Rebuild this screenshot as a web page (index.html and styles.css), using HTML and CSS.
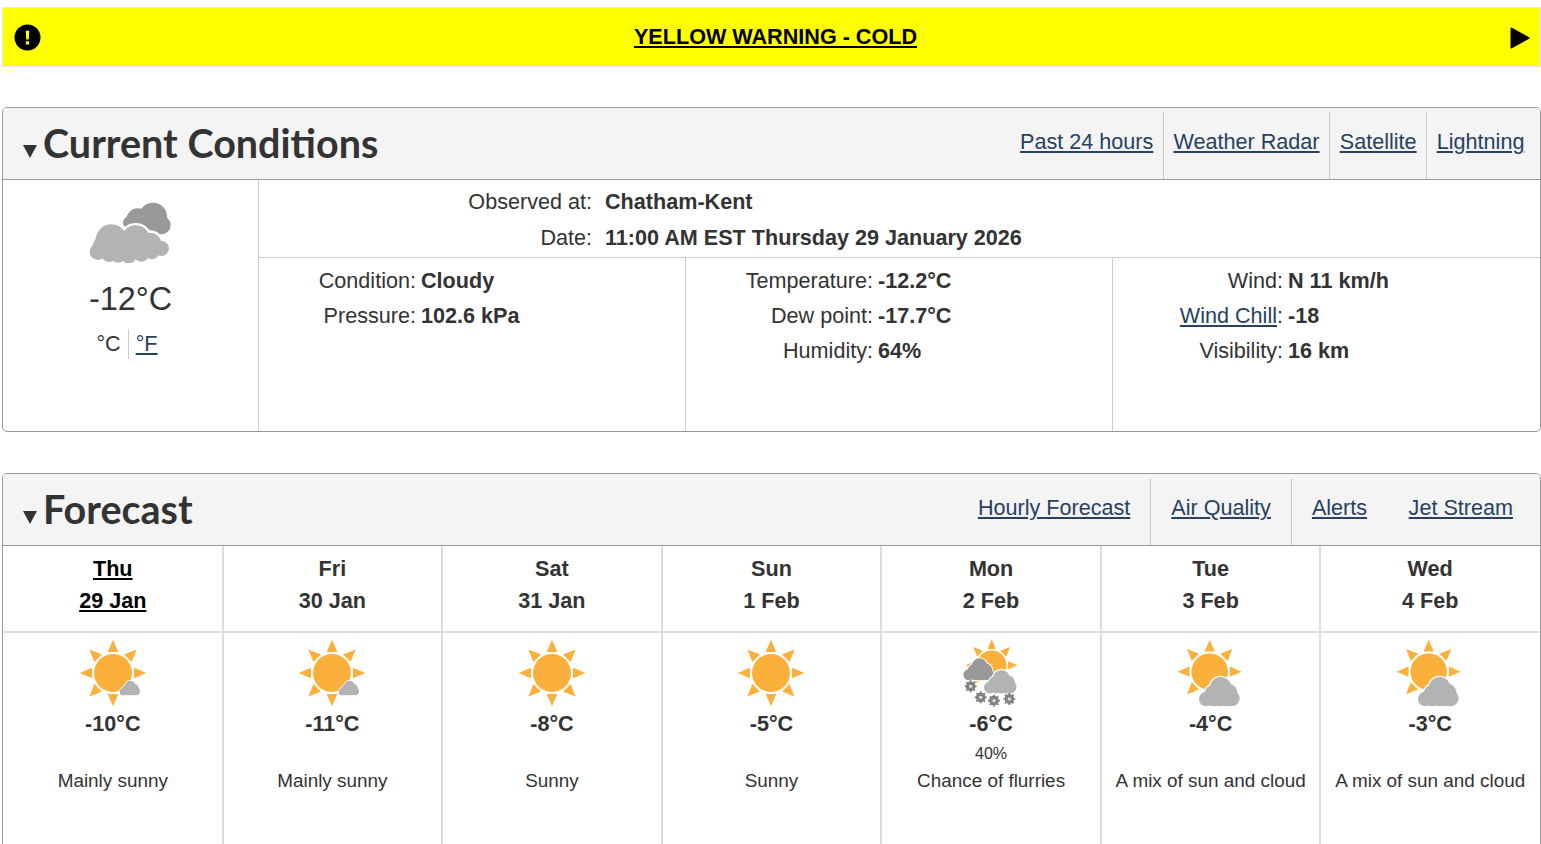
FILE: index.html
```html
<!DOCTYPE html>
<html lang="en">
<head>
<meta charset="utf-8">
<title>Chatham-Kent - Weather</title>
<link rel="stylesheet" href="styles.css">
</head>
<body>
<svg class="defs" aria-hidden="true">
  <defs>
    <g id="rays">
      <path id="ray" d="M-16-63 0-100 16-63Z"/>
      <use href="#ray" transform="rotate(45)"/>
      <use href="#ray" transform="rotate(90)"/>
      <use href="#ray" transform="rotate(135)"/>
      <use href="#ray" transform="rotate(180)"/>
      <use href="#ray" transform="rotate(225)"/>
      <use href="#ray" transform="rotate(270)"/>
      <use href="#ray" transform="rotate(315)"/>
    </g>
    <g id="sun">
      <use href="#rays" fill="#fbb03b"/>
      <circle r="57" fill="#fbb03b"/>
    </g>
    <g id="cloud-shape">
      <circle cx="-54" cy="-10" r="47"/>
      <circle cx="19" cy="-10" r="44"/>
      <circle cx="62" cy="2" r="34"/>
      <circle cx="96" cy="15" r="23"/>
      <circle cx="-94" cy="25" r="25"/>
      <circle cx="-76" cy="8" r="33"/>
      <circle cx="-60" cy="32" r="24"/>
      <circle cx="-34" cy="35" r="23"/>
      <circle cx="-2" cy="35" r="25"/>
      <circle cx="36" cy="31" r="24"/>
      <circle cx="68" cy="27" r="21"/>
    </g>
    <g id="dark-shape">
      <circle cx="71" cy="-80" r="42"/>
      <circle cx="26" cy="-70" r="35"/>
      <circle cx="1" cy="-62" r="20"/>
      <circle cx="96" cy="-55" r="28"/>
      <circle cx="45" cy="-58" r="32"/>
    </g>
    <g id="cloud-halo">
      <use href="#cloud-shape" fill="#fff" stroke="#fff" stroke-width="14"/>
      <use href="#cloud-shape" fill="#b3b3b3"/>
    </g>
    <g id="puff-shape">
      <circle cx="5" cy="-12" r="32"/>
      <circle cx="-38" cy="22" r="22"/>
      <circle cx="38" cy="20" r="24"/>
      <circle cx="30" cy="2" r="25"/>
      <circle cx="-16" cy="6" r="27"/>
      <circle cx="-16" cy="24" r="20"/>
      <circle cx="4" cy="22" r="22"/>
      <circle cx="22" cy="24" r="20"/>
    </g>
    <g id="puff">
      <use href="#puff-shape" fill="#fff" stroke="#fff" stroke-width="8"/>
      <use href="#puff-shape" fill="#b3b3b3"/>
    </g>
    <g id="puff-dark">
      <use href="#puff-shape" fill="#fff" stroke="#fff" stroke-width="8"/>
      <use href="#puff-shape" fill="#999"/>
    </g>
    <g id="flake">
      <circle r="11" fill="none" stroke="#808080" stroke-width="7"/>
      <path d="M0-18V18M-18 0H18M-13-13 13 13M-13 13 13-13" stroke="#808080" stroke-width="5" fill="none"/>
      <circle r="5" fill="#ddd"/>
    </g>
  </defs>
</svg>

<div class="page">
  <section class="alert">
    <svg class="alert-icon" viewBox="0 0 28 28" aria-hidden="true"><circle cx="14" cy="14" r="13.5" fill="#000"/><path d="M12.2 7h3.6l-.5 9h-2.6zM12.3 18h3.4v3.3h-3.4z" fill="#ff0"/></svg>
    <a class="alert-link" href="#">YELLOW WARNING - COLD</a>
    <svg class="alert-arrow" viewBox="0 0 20 22" aria-hidden="true"><path d="M1.5 1.5 18.5 11 1.5 20.5Z" fill="#000" stroke="#000" stroke-width="2" stroke-linejoin="round"/></svg>
  </section>

  <section class="panel current">
    <header class="panel-head">
      <h2 class="panel-title"><span class="caret"></span>Current Conditions</h2>
      <nav class="tabs">
        <a class="tab" href="#">Past 24 hours</a>
        <a class="tab" href="#">Weather Radar</a>
        <a class="tab" href="#">Satellite</a>
        <a class="tab" href="#">Lightning</a>
      </nav>
    </header>
    <div class="current-body">
      <div class="now">
        <svg class="now-icon" viewBox="85 30 255 195" aria-hidden="true">
          <use href="#dark-shape" transform="translate(209 160)" fill="#999"/>
          <use href="#cloud-halo" transform="translate(209 160)"/>
        </svg>
        <div class="now-temp">-12°C</div>
        <div class="units"><span class="unit">°C</span><a class="unit unit-link" href="#">°F</a></div>
      </div>
      <div class="details">
        <dl class="obs">
          <dt>Observed at:</dt><dd>Chatham-Kent</dd>
          <dt>Date:</dt><dd>11:00 AM EST Thursday 29 January 2026</dd>
        </dl>
        <div class="metrics">
          <dl class="metric metric-a">
            <dt>Condition:</dt><dd>Cloudy</dd>
            <dt>Pressure:</dt><dd>102.6 kPa</dd>
          </dl>
          <dl class="metric metric-b">
            <dt>Temperature:</dt><dd>-12.2°C</dd>
            <dt>Dew point:</dt><dd>-17.7°C</dd>
            <dt>Humidity:</dt><dd>64%</dd>
          </dl>
          <dl class="metric metric-c">
            <dt>Wind:</dt><dd>N 11 km/h</dd>
            <dt><a href="#">Wind Chill</a>:</dt><dd>-18</dd>
            <dt>Visibility:</dt><dd>16 km</dd>
          </dl>
        </div>
      </div>
    </div>
  </section>

  <section class="panel forecast">
    <header class="panel-head">
      <h2 class="panel-title"><span class="caret"></span>Forecast</h2>
      <nav class="tabs">
        <a class="tab" href="#">Hourly Forecast</a>
        <a class="tab" href="#">Air Quality</a>
        <a class="tab" href="#">Alerts</a>
        <a class="tab tab-plain" href="#">Jet Stream</a>
      </nav>
    </header>
    <div class="days">
      <article class="day">
        <h3 class="day-head day-today"><span>Thu</span><span>29 Jan</span></h3>
        <div class="day-body">
          <svg class="day-icon" viewBox="-102 -102 204 204" aria-hidden="true"><use href="#sun"/><use href="#puff" transform="translate(50 45) scale(.5)"/></svg>
          <div class="day-temp">-10°C</div><div class="pop"></div>
          <div class="day-text">Mainly sunny</div>
        </div>
      </article>
      <article class="day">
        <h3 class="day-head"><span>Fri</span><span>30 Jan</span></h3>
        <div class="day-body">
          <svg class="day-icon" viewBox="-102 -102 204 204" aria-hidden="true"><use href="#sun"/><use href="#puff" transform="translate(50 45) scale(.5)"/></svg>
          <div class="day-temp">-11°C</div><div class="pop"></div>
          <div class="day-text">Mainly sunny</div>
        </div>
      </article>
      <article class="day">
        <h3 class="day-head"><span>Sat</span><span>31 Jan</span></h3>
        <div class="day-body">
          <svg class="day-icon" viewBox="-102 -102 204 204" aria-hidden="true"><use href="#sun"/></svg>
          <div class="day-temp">-8°C</div><div class="pop"></div>
          <div class="day-text">Sunny</div>
        </div>
      </article>
      <article class="day">
        <h3 class="day-head"><span>Sun</span><span>1 Feb</span></h3>
        <div class="day-body">
          <svg class="day-icon" viewBox="-102 -102 204 204" aria-hidden="true"><use href="#sun"/></svg>
          <div class="day-temp">-5°C</div><div class="pop"></div>
          <div class="day-text">Sunny</div>
        </div>
      </article>
      <article class="day">
        <h3 class="day-head"><span>Mon</span><span>2 Feb</span></h3>
        <div class="day-body">
          <svg class="day-icon" viewBox="-102 -102 204 204" aria-hidden="true">
            <use href="#sun" transform="translate(2 -23) scale(.78)"/>
            <use href="#puff-dark" transform="translate(-38 -11) scale(.75)"/>
            <use href="#puff" transform="translate(27 26) scale(.8)"/>
            <use href="#flake" transform="translate(-61 40)"/>
            <use href="#flake" transform="translate(-31 73)"/>
            <use href="#flake" transform="translate(9 83)"/>
            <use href="#flake" transform="translate(55 78)"/>
          </svg>
          <div class="day-temp">-6°C</div><div class="pop">40%</div>
          <div class="day-text">Chance of flurries</div>
        </div>
      </article>
      <article class="day">
        <h3 class="day-head"><span>Tue</span><span>3 Feb</span></h3>
        <div class="day-body">
          <svg class="day-icon" viewBox="-102 -102 204 204" aria-hidden="true"><use href="#sun" transform="translate(-4 -4) scale(.96)"/><use href="#puff" transform="translate(24 56)"/></svg>
          <div class="day-temp">-4°C</div><div class="pop"></div>
          <div class="day-text">A mix of sun and cloud</div>
        </div>
      </article>
      <article class="day">
        <h3 class="day-head"><span>Wed</span><span>4 Feb</span></h3>
        <div class="day-body">
          <svg class="day-icon" viewBox="-102 -102 204 204" aria-hidden="true"><use href="#sun" transform="translate(-4 -4) scale(.96)"/><use href="#puff" transform="translate(24 56)"/></svg>
          <div class="day-temp">-3°C</div><div class="pop"></div>
          <div class="day-text">A mix of sun and cloud</div>
        </div>
      </article>
    </div>
  </section>
</div>
</body>
</html>
```
FILE: styles.css
```css
* { box-sizing: border-box; }
html, body { margin: 0; height: 844px; overflow: hidden; background: #fff; }
body { font-family: "Liberation Sans", Arial, sans-serif; font-size: 21.6px; color: #333; }
a { color: #284162; }
.defs { display: block; width: 0; height: 0; }
.page { padding: 7px 0 0 2px; display: flex; flex-direction: column; gap: 40px; }

.alert { height: 60px; background: #ff0; border: 1px solid #e6e6e6; display: flex; align-items: center; justify-content: space-between; padding: 0 10px 0 11px; }
.alert-icon { width: 27px; height: 27px; flex: none; margin-top: 1px; }
.alert-link { color: #000; font-weight: 700; }
.alert-arrow { width: 20px; height: 22px; flex: none; margin-top: 1px; }

.panel { border: 1px solid #999; border-radius: 5px; overflow: hidden; }
.panel-head { height: 72px; background: #f4f4f4; border-bottom: 1px solid #999; display: flex; justify-content: space-between; }
.panel-title { margin: 0; padding: 0 0 2px 20px; font: 700 39.5px/72px Lato, sans-serif; color: #333; display: flex; align-items: center; }
.caret { width: 0; height: 0; margin: 17px 6px 0 0; border: 7.5px solid transparent; border-top: 13px solid #333; border-bottom: 0; }
.tabs { display: flex; margin-top: 4px; padding-right: 6px; }
.tab { padding: 17px 9.6px 0; border-left: 1px solid #ccc; }
.tab:first-child { border-left: 0; }
.forecast { margin-top: 1px; }
.forecast .tabs { padding-right: 27px; }
.forecast .tab { padding-left: 20px; padding-right: 20px; }
.forecast .tab-plain { border-left: 0; padding-left: 21.5px; padding-right: 0; }

.current-body { height: 251px; display: flex; }
.now { width: 256px; flex: none; border-right: 1px solid #ccc; display: flex; flex-direction: column; align-items: center; padding-top: 20px; }
.now-icon { width: 85px; height: 65px; display: block; }
.now-temp { margin-top: 12px; font-size: 32.4px; line-height: 44px; }
.units { margin-top: 8px; display: flex; line-height: 30px; padding-right: 7px; }
.unit { padding: 0 7px; }
.unit-link { border-left: 1px solid #ccc; }
.details { flex: 1; display: flex; flex-direction: column; }
dl { margin: 0; display: grid; line-height: 35px; }
dt { text-align: right; }
dd { margin: 0; font-weight: 700; }
.obs { grid-template-columns: 333px 1fr; column-gap: 13px; height: 78px; padding-top: 4.5px; border-bottom: 1px solid #ccc; line-height: 34px; }
.metrics { flex: 1; display: grid; grid-template-columns: 426px 427px 1fr; }
.metric { align-content: start; column-gap: 5px; padding-top: 5px; border-left: 1px solid #ccc; }
.metric:first-child { border-left: 0; }
.metric-a { grid-template-columns: 157px 1fr; }
.metric-b { grid-template-columns: 187px 1fr; }
.metric-c { grid-template-columns: 170px 1fr; }

.days { display: grid; grid-template-columns: repeat(7, 1fr); height: 320px; }
.day { border-left: 1px solid #ddd; border-right: 1px solid #ddd; text-align: center; }
.day:first-child { border-left-color: transparent; }
.day:last-child { border-right-color: transparent; }
.day-head { margin: 0; height: 87px; border-bottom: 2px solid #ddd; padding-top: 6.5px; font-size: 21.6px; font-weight: 700; line-height: 32px; display: flex; flex-direction: column; }
.day-today { color: #000; text-decoration: underline; }
.day-body { padding-top: 6px; }
.day-icon { display: block; width: 68px; height: 68px; margin: 0 auto; }
.day-temp { font-size: 21.6px; font-weight: 700; line-height: 32px; margin-top: 1px; }
.pop { height: 26px; font-size: 16px; line-height: 26px; margin-top: 1px; }
.day-text { font-size: 18.9px; line-height: 28px; }
```
